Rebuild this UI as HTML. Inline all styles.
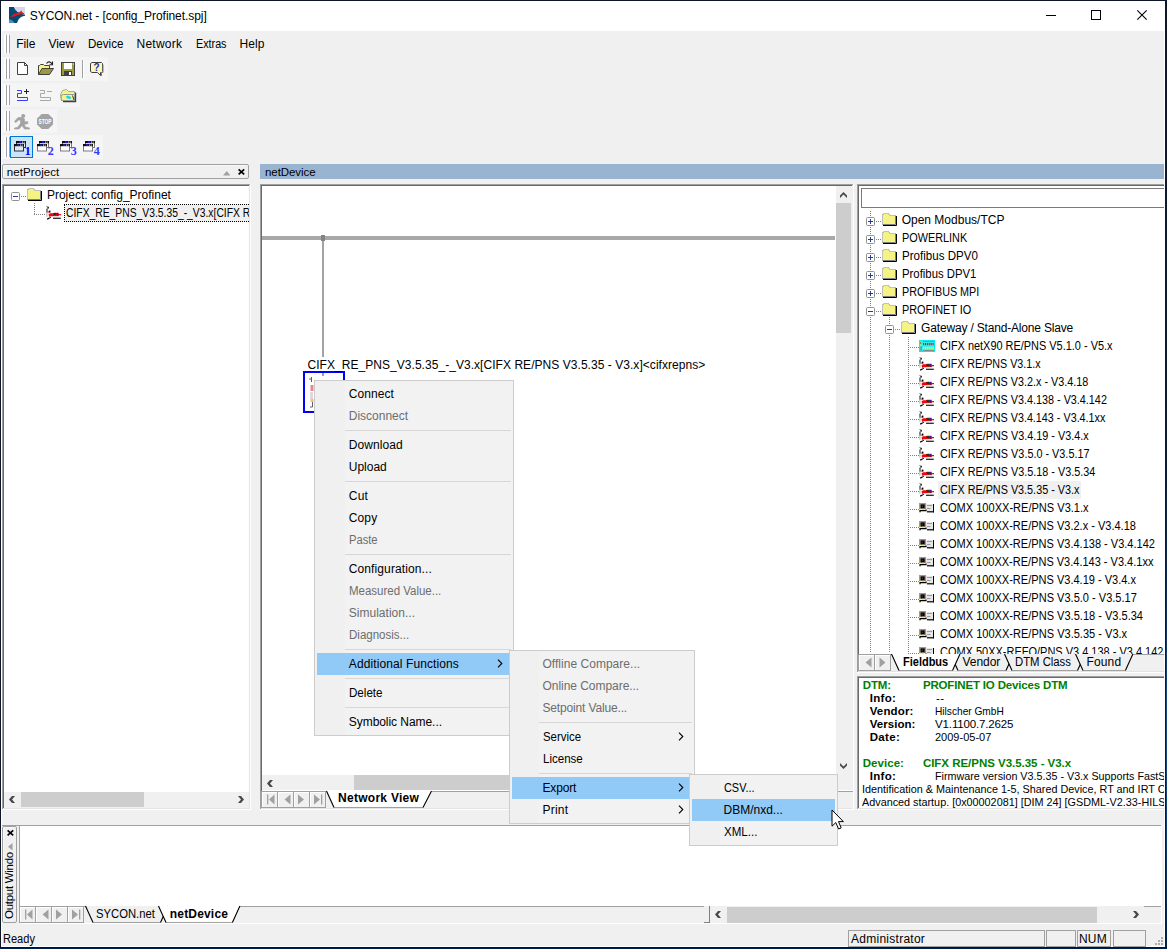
<!DOCTYPE html>
<html lang="en"><head><meta charset="utf-8"><title>SYCON.net - [config_Profinet.spj]</title>
<style>
html,body{margin:0;padding:0;}
body{width:1167px;height:949px;overflow:hidden;position:relative;background:#f0f0f0;font-family:"Liberation Sans",sans-serif;color:#000;}
body>div,body>span,body>svg{position:absolute;}
.t{white-space:pre;line-height:1;display:block;}
.g{color:#6d6d6d;}
svg{overflow:visible;}
</style></head><body>
<div style="left:0px;top:0px;width:1167px;height:949px;background:#f0f0f0;"></div>
<div style="left:1px;top:1px;width:1164px;height:30px;background:#ffffff;"></div>
<div style="left:1px;top:31px;width:1px;height:916px;background:#ffffff;"></div>
<span id="t0" class="t " style="left:29.80px;top:10.20px;font-size:12px;letter-spacing:-0.054px;line-height:12px;">SYCON.net - [config_Profinet.spj]</span>
<svg style="left:1046px;top:10px;" width="11" height="11" viewBox="0 0 11 11"><path d="M0 5.5H10" stroke="#000" stroke-width="1" fill="none"/></svg>
<svg style="left:1091px;top:10px;" width="11" height="11" viewBox="0 0 11 11"><rect x="0.5" y="0.5" width="9" height="9" stroke="#000" stroke-width="1" fill="none"/></svg>
<svg style="left:1137px;top:10px;" width="11" height="11" viewBox="0 0 11 11"><path d="M0.3 0.3L9.7 9.7M9.7 0.3L0.3 9.7" stroke="#000" stroke-width="1.1" fill="none"/></svg>
<svg style="left:9px;top:7px;" width="16" height="16" viewBox="0 0 16 16"><rect width="16" height="16" fill="#004a73"/>
<path d="M4.8 0Q7 6.3 16 7.7V0Z" fill="#d3d9e8"/>
<path d="M16 8.7Q9.6 9.4 8 16H16Z" fill="#ffffff"/>
<path d="M0 12.2Q4 12.6 5.3 16H0Z" fill="#4f8dc3"/>
<path d="M1.1 9.8L4.5 7.2L8 6L10.5 5.2L12.3 3.6L13 5L15.4 6.4L13.5 7.2L11 7.2L10 8.8L9.6 7.7L7 8.6L5 9.8Z" fill="#e8151c"/></svg>
<div style="left:4px;top:35px;width:2px;height:18px;background:#ffffff;"></div>
<div style="left:6px;top:35px;width:1px;height:18px;background:#a0a0a0;"></div>
<div style="left:7px;top:35px;width:2px;height:18px;background:#ffffff;"></div>
<div style="left:9px;top:35px;width:1px;height:18px;background:#a0a0a0;"></div>
<span id="t1" class="t " style="left:16.30px;top:38.20px;font-size:12px;letter-spacing:-0.096px;line-height:12px;">File</span>
<span id="t2" class="t " style="left:48.60px;top:38.20px;font-size:12px;letter-spacing:-0.113px;line-height:12px;">View</span>
<span id="t3" class="t " style="left:87.60px;top:38.20px;font-size:12px;transform:scaleX(0.9650);transform-origin:0 0;line-height:12px;">Device</span>
<span id="t4" class="t " style="left:136.60px;top:38.20px;font-size:12px;letter-spacing:0.212px;line-height:12px;">Network</span>
<span id="t5" class="t " style="left:195.50px;top:38.20px;font-size:12px;transform:scaleX(0.8965);transform-origin:0 0;line-height:12px;">Extras</span>
<span id="t6" class="t " style="left:239.50px;top:38.20px;font-size:12px;letter-spacing:0.088px;line-height:12px;">Help</span>
<div style="left:2px;top:57px;width:106px;height:24px;background:#f5f5f5;"></div>
<div style="left:2px;top:83px;width:78px;height:24px;background:#f5f5f5;"></div>
<div style="left:2px;top:109px;width:55px;height:24px;background:#f5f5f5;"></div>
<div style="left:2px;top:135px;width:101px;height:24px;background:#f5f5f5;"></div>
<div style="left:4px;top:59px;width:2px;height:20px;background:#ffffff;"></div>
<div style="left:6px;top:59px;width:1px;height:20px;background:#a0a0a0;"></div>
<div style="left:7px;top:59px;width:2px;height:20px;background:#ffffff;"></div>
<div style="left:9px;top:59px;width:1px;height:20px;background:#a0a0a0;"></div>
<div style="left:4px;top:85px;width:2px;height:20px;background:#ffffff;"></div>
<div style="left:6px;top:85px;width:1px;height:20px;background:#a0a0a0;"></div>
<div style="left:7px;top:85px;width:2px;height:20px;background:#ffffff;"></div>
<div style="left:9px;top:85px;width:1px;height:20px;background:#a0a0a0;"></div>
<div style="left:4px;top:111px;width:2px;height:20px;background:#ffffff;"></div>
<div style="left:6px;top:111px;width:1px;height:20px;background:#a0a0a0;"></div>
<div style="left:7px;top:111px;width:2px;height:20px;background:#ffffff;"></div>
<div style="left:9px;top:111px;width:1px;height:20px;background:#a0a0a0;"></div>
<div style="left:4px;top:137px;width:2px;height:20px;background:#ffffff;"></div>
<div style="left:6px;top:137px;width:1px;height:20px;background:#a0a0a0;"></div>
<div style="left:7px;top:137px;width:2px;height:20px;background:#ffffff;"></div>
<div style="left:9px;top:137px;width:1px;height:20px;background:#a0a0a0;"></div>
<svg style="left:17px;top:62px;" width="11" height="13" viewBox="0 0 11 13"><path d="M0.5 0.5H7.5L10.5 3.5V12.5H0.5Z" fill="#fff" stroke="#404040"/>
<path d="M7.5 0.5V3.5H10.5" fill="none" stroke="#404040"/></svg>
<svg style="left:38px;top:61px;" width="16" height="14" viewBox="0 0 16 14"><path d="M0.5 13.5V4.5H1.5L2.5 3.5H5.5L6.5 4.5H11.5V7.5" fill="#f5f384" stroke="#404040"/>
<path d="M0.5 13.5L4 7.5H15.5L11.5 13.5Z" fill="#9a9a40" stroke="#404040"/>
<path d="M8.5 2.5C10 0.3 12.5 0.3 14 3" fill="none" stroke="#202020" stroke-width="1.1"/>
<path d="M14.5 0.5V3.8H11.5" fill="none" stroke="#202020" stroke-width="1.1"/></svg>
<svg style="left:61px;top:62px;" width="14" height="14" viewBox="0 0 14 14"><rect x="0.5" y="0.5" width="13" height="13" fill="#9a9a40" stroke="#404040"/>
<rect x="3" y="1" width="8" height="6" fill="#fff"/>
<rect x="3" y="9" width="8" height="4.5" fill="#404040"/>
<rect x="8" y="10" width="2" height="3" fill="#fff"/>
<rect x="12" y="1.5" width="1" height="1" fill="#fff"/></svg>
<div style="left:82px;top:60px;width:1px;height:18px;background:#a0a0a0;"></div>
<div style="left:83px;top:60px;width:1px;height:18px;background:#ffffff;"></div>
<svg style="left:90px;top:62px;" width="14" height="15" viewBox="0 0 14 15"><path d="M2 0.5H11.5L12.5 1.5V9.5L11.5 10.5H10.5V13.5L7.5 10.5H2L0.5 9.5V1.5Z" fill="#fafac0" stroke="#404040"/>
<path d="M13 2.5V10.5H11.5V14" fill="none" stroke="#808080"/>
<text x="6.6" y="9.3" font-family="Liberation Sans" font-weight="bold" font-size="10" text-anchor="middle" fill="#2a2aa8">?</text></svg>
<svg style="left:17px;top:89px;" width="12" height="12" viewBox="0 0 12 12"><path d="M0 1.5H4.5V4.5H0.5V8.5H10.5V11.5H0" fill="none" stroke="#3c3cff" stroke-width="1"/><path d="M7 2.5H12" stroke="#202020" fill="none"/><path d="M9.5 0V5" stroke="#202020" fill="none"/></svg>
<svg style="left:40px;top:89px;" width="12" height="12" viewBox="0 0 12 12"><path d="M0 1.5H4.5V4.5H0.5V8.5H10.5V11.5H0" fill="none" stroke="#a8a8a8" stroke-width="1"/><path d="M7 2.5H12" stroke="#a8a8a8" fill="none"/></svg>
<svg style="left:60px;top:89px;" width="17" height="13" viewBox="0 0 17 13"><path d="M1.5 11.5L0.5 5.5L2.5 1.5L6.5 0.5L8.5 2.5H14.5V4.5" fill="#f5f384" stroke="#a8a8a8"/>
<path d="M15.5 3.5V12.5H3" fill="none" stroke="#404040" stroke-width="1.4"/>
<path d="M1.5 11.5H14.5V5.5H3.5L1 6.5Z" fill="#f5f384" stroke="#989898"/>
<ellipse cx="8.6" cy="8.4" rx="2.6" ry="1.4" fill="#18d8e8" transform="rotate(20 8.6 8.4)"/>
<path d="M12.5 6.5L14 11" stroke="#404040" fill="none"/></svg>
<svg style="left:14px;top:114px;" width="16" height="15" viewBox="0 0 16 15"><circle cx="9.2" cy="2" r="2" fill="#a3a3a3"/>
<path d="M4 3.5H8L10.5 5V8L13.5 7.5L14 9.5L10 10.5L11.5 13L15.5 14V15H10.5L8 11.5L5 15H0.5V14L3.5 13.5L6.5 9.5V6H4.5L2 8.5L0.5 7.5Z" fill="#a3a3a3" stroke="#a3a3a3" stroke-width="0.7"/></svg>
<svg style="left:37px;top:114px;" width="16" height="15" viewBox="0 0 16 15"><path d="M4.7 0H11.3L16 4.4V10.6L11.3 15H4.7L0 10.6V4.4Z" fill="#a3a3a3"/>
<text x="8" y="10" font-family="Liberation Sans" font-weight="bold" font-size="6.4" text-anchor="middle" fill="#fff" textLength="13" lengthAdjust="spacingAndGlyphs">STOP</text></svg>
<div style="left:10px;top:136px;width:23px;height:22px;background:#cce4f7;border:1px solid #0078d7;box-sizing:border-box;"></div>
<svg style="left:14px;top:141px;" width="17" height="15" viewBox="0 0 17 15"><rect x="2.5" y="0.5" width="9" height="6" fill="#dfeaf6" stroke="#303030"/>
<rect x="2" y="0" width="10" height="2.2" fill="#101010"/>
<rect x="5" y="0.4" width="2.4" height="1.5" fill="#2020ff"/>
<rect x="8" y="0.6" width="1" height="1" fill="#fff"/><rect x="9.7" y="0.6" width="1" height="1" fill="#fff"/>
<rect x="0.5" y="3.5" width="9" height="6.5" fill="#dfeaf6" stroke="#303030"/>
<rect x="0" y="3" width="10" height="2.2" fill="#101010"/>
<rect x="3" y="3.4" width="2.4" height="1.5" fill="#2020ff"/>
<rect x="6" y="3.6" width="1" height="1" fill="#fff"/><rect x="7.7" y="3.6" width="1" height="1" fill="#fff"/>
<text x="13.8" y="14" font-family="Liberation Serif" font-weight="bold" font-size="12" text-anchor="middle" fill="#0000ff">1</text></svg>
<svg style="left:37px;top:141px;" width="17" height="15" viewBox="0 0 17 15"><rect x="2.5" y="0.5" width="9" height="6" fill="#ffffff" stroke="#7a7a7a"/>
<rect x="2" y="0" width="10" height="2.2" fill="#101010"/>
<rect x="5" y="0.4" width="2.4" height="1.5" fill="#2020ff"/>
<rect x="8" y="0.6" width="1" height="1" fill="#fff"/><rect x="9.7" y="0.6" width="1" height="1" fill="#fff"/>
<rect x="0.5" y="3.5" width="9" height="6.5" fill="#ffffff" stroke="#7a7a7a"/>
<rect x="0" y="3" width="10" height="2.2" fill="#101010"/>
<rect x="3" y="3.4" width="2.4" height="1.5" fill="#2020ff"/>
<rect x="6" y="3.6" width="1" height="1" fill="#fff"/><rect x="7.7" y="3.6" width="1" height="1" fill="#fff"/>
<text x="13.8" y="14" font-family="Liberation Serif" font-weight="bold" font-size="12" text-anchor="middle" fill="#3838ff">2</text></svg>
<svg style="left:60px;top:141px;" width="17" height="15" viewBox="0 0 17 15"><rect x="2.5" y="0.5" width="9" height="6" fill="#ffffff" stroke="#7a7a7a"/>
<rect x="2" y="0" width="10" height="2.2" fill="#101010"/>
<rect x="5" y="0.4" width="2.4" height="1.5" fill="#2020ff"/>
<rect x="8" y="0.6" width="1" height="1" fill="#fff"/><rect x="9.7" y="0.6" width="1" height="1" fill="#fff"/>
<rect x="0.5" y="3.5" width="9" height="6.5" fill="#ffffff" stroke="#7a7a7a"/>
<rect x="0" y="3" width="10" height="2.2" fill="#101010"/>
<rect x="3" y="3.4" width="2.4" height="1.5" fill="#2020ff"/>
<rect x="6" y="3.6" width="1" height="1" fill="#fff"/><rect x="7.7" y="3.6" width="1" height="1" fill="#fff"/>
<text x="13.8" y="14" font-family="Liberation Serif" font-weight="bold" font-size="12" text-anchor="middle" fill="#3838ff">3</text></svg>
<svg style="left:83px;top:141px;" width="17" height="15" viewBox="0 0 17 15"><rect x="2.5" y="0.5" width="9" height="6" fill="#ffffff" stroke="#7a7a7a"/>
<rect x="2" y="0" width="10" height="2.2" fill="#101010"/>
<rect x="5" y="0.4" width="2.4" height="1.5" fill="#2020ff"/>
<rect x="8" y="0.6" width="1" height="1" fill="#fff"/><rect x="9.7" y="0.6" width="1" height="1" fill="#fff"/>
<rect x="0.5" y="3.5" width="9" height="6.5" fill="#ffffff" stroke="#7a7a7a"/>
<rect x="0" y="3" width="10" height="2.2" fill="#101010"/>
<rect x="3" y="3.4" width="2.4" height="1.5" fill="#2020ff"/>
<rect x="6" y="3.6" width="1" height="1" fill="#fff"/><rect x="7.7" y="3.6" width="1" height="1" fill="#fff"/>
<text x="13.8" y="14" font-family="Liberation Serif" font-weight="bold" font-size="12" text-anchor="middle" fill="#3838ff">4</text></svg>
<div style="left:2px;top:164px;width:247px;height:15px;background:#f0f0f0;border:1px solid #a0a0a0;border-radius:2px;box-sizing:border-box;box-shadow:inset 1px 1px 0 #f8f8f8;"></div>
<span id="t7" class="t " style="left:6.80px;top:166.20px;font-size:11.5px;letter-spacing:0.075px;line-height:12px;">netProject</span>
<svg style="left:223px;top:171px;" width="8" height="5" viewBox="0 0 8 5"><path d="M0 4.5L3.7 0L7.4 4.5Z" fill="#a0a0a0"/></svg>
<svg style="left:238px;top:169px;" width="7" height="6" viewBox="0 0 7 6"><path d="M0.6 0.4L6.2 5.4M6.2 0.4L0.6 5.4" stroke="#000" stroke-width="1.7" fill="none"/></svg>
<div style="left:2px;top:184px;width:249px;height:626px;background:#ffffff;"></div>
<div style="left:2px;top:184px;width:248px;height:625px;background:#a0a0a0;"></div>
<div style="left:3px;top:185px;width:247px;height:624px;background:#e3e3e3;"></div>
<div style="left:3px;top:185px;width:246px;height:623px;background:#696969;"></div>
<div style="left:4px;top:186px;width:245px;height:622px;background:#fff;"></div>
<svg style="left:11px;top:192px;" width="9" height="9" viewBox="0 0 9 9"><rect x="0.5" y="0.5" width="8" height="8" rx="1" fill="#fff" stroke="#919191"/><path d="M2 4.5H7" stroke="#1f3f9f" fill="none"/></svg>
<div style="left:21px;top:196px;width:6px;height:1px;background:repeating-linear-gradient(90deg,#808080 0 1px,transparent 1px 2px);"></div>
<svg style="left:27px;top:187.7px;" width="16" height="14" viewBox="0 0 16 14"><path d="M0.5 11.5V2L2 0.5H6.5L8 2.5H13.5V11.5Z" fill="#f5f384" stroke="#808080"/>
<path d="M0.5 11.5V2L2 0.5H6.5L8 2.5H13.5" fill="none" stroke="#c0c0c0"/>
<path d="M14.5 3V12.5H1" fill="none" stroke="#000"/>
<rect x="1" y="3" width="12" height="8" fill="#f5f384"/><rect x="2" y="1" width="4.5" height="2" fill="#f5f384"/></svg>
<span id="t8" class="t " style="left:46.90px;top:189.20px;font-size:12px;letter-spacing:-0.003px;line-height:12px;">Project: config_Profinet</span>
<div style="left:34px;top:203px;width:1px;height:11px;background:repeating-linear-gradient(180deg,#808080 0 1px,transparent 1px 2px);"></div>
<div style="left:34px;top:214px;width:11px;height:1px;background:repeating-linear-gradient(90deg,#808080 0 1px,transparent 1px 2px);"></div>
<svg style="left:45px;top:206px;" width="16" height="15" viewBox="0 0 16 15"><rect x="1" y="2.6" width="2" height="4.2" fill="#868686"/><rect x="1" y="6.8" width="1.7" height="4" fill="#cfcfcf"/>
<rect x="2.4" y="0.8" width="1.4" height="1.8" fill="#000"/><rect x="1.4" y="0.2" width="1.2" height="0.8" fill="#606060"/>
<rect x="3.8" y="4.6" width="1.6" height="2" fill="#000"/><rect x="3.2" y="5.6" width="1" height="1" fill="#ff0000"/>
<path d="M3.5 8.6L5 7.2H8L9 6.8H13.6V8H16V9.2H13.8V10.2H6L5 10.8H4.2Z" fill="#ff0000"/>
<rect x="8.6" y="7" width="2.6" height="2.3" fill="#101010"/><rect x="9.5" y="7.4" width="1" height="1" fill="#20a0a0"/>
<rect x="12.2" y="7" width="1.1" height="2.6" fill="#1818a0"/><rect x="7.6" y="8" width="0.9" height="1.2" fill="#8020a0"/>
<rect x="9.4" y="9.6" width="1.2" height="0.8" fill="#a0a020"/>
<rect x="8" y="10.6" width="7.8" height="1.1" fill="#fff"/>
<rect x="8" y="11.7" width="7.8" height="1.1" fill="#000"/>
<path d="M2 13.4L3 13.6L6.2 11.6L5.6 10.9L2.2 12.3Z" fill="#000"/></svg>
<div style="left:64px;top:204px;width:185px;height:18px;background:#f0f0f0;"></div>
<div style="left:64px;top:204px;width:186px;height:18px;border:1px dotted #000;border-right:none;box-sizing:border-box;width:185px;"></div>
<div style="left:64px;top:204px;width:185px;height:18px;overflow:hidden;"><span id="t9" class="t " style="left:2.00px;top:3.20px;font-size:12px;transform:scaleX(0.8606);transform-origin:0 0;line-height:12px;position:absolute;">CIFX_RE_PNS_V3.5.35_-_V3.x[CIFX RE/</span></div>
<div style="left:4px;top:792px;width:245px;height:16px;background:#f0f0f0;"></div>
<div style="left:21px;top:792px;width:123px;height:15px;background:#cdcdcd;"></div>
<svg style="left:9px;top:796px;" width="6" height="7" viewBox="0 0 6 7"><path d="M3 0H6L3 3.5L6 7H3L0 3.5Z" fill="#484848"/></svg>
<svg style="left:238px;top:796px;" width="6" height="7" viewBox="0 0 6 7"><path d="M0 0H3L6 3.5L3 7H0L3 3.5Z" fill="#484848"/></svg>
<div style="left:260px;top:164px;width:905px;height:15px;background:#99b4d1;"></div>
<span id="t10" class="t " style="left:265.00px;top:166.20px;font-size:11.5px;letter-spacing:-0.076px;line-height:12px;">netDevice</span>
<div style="left:260px;top:184px;width:594px;height:626px;background:#ffffff;"></div>
<div style="left:260px;top:184px;width:593px;height:625px;background:#a0a0a0;"></div>
<div style="left:261px;top:185px;width:592px;height:624px;background:#e3e3e3;"></div>
<div style="left:261px;top:185px;width:591px;height:623px;background:#696969;"></div>
<div style="left:262px;top:186px;width:590px;height:622px;background:#fff;"></div>
<div style="left:262px;top:236px;width:573px;height:4px;background:#a8a8a8;"></div>
<div style="left:321px;top:235px;width:4px;height:6px;background:#848484;"></div>
<div style="left:322px;top:241px;width:2px;height:116px;background:#a3a3a3;"></div>
<div style="left:303px;top:371px;width:42px;height:42px;background:#ffffff;border:2px solid #0000ff;box-sizing:border-box;"></div>
<div style="left:322px;top:373px;width:2px;height:3px;background:#a0a0a0;"></div>
<svg style="left:308px;top:376px;" width="8" height="32" viewBox="0 0 8 32"><path d="M1 3H3M3.5 1V6" stroke="#606060" fill="none"/>
<rect x="2.5" y="9" width="3" height="6" fill="#e88a8a"/>
<rect x="2" y="16" width="3" height="7" fill="#e4d6e0"/>
<rect x="2.5" y="23" width="3" height="3" fill="#f0c078"/>
<path d="M4.5 26V31H2" stroke="#606060" fill="none"/></svg>
<span id="t11" class="t " style="left:307.50px;top:359.20px;font-size:12px;letter-spacing:0.046px;line-height:12px;">CIFX_RE_PNS_V3.5.35_-_V3.x[CIFX RE/PNS V3.5.35 - V3.x]&lt;cifxrepns&gt;</span>
<div style="left:836px;top:186px;width:17px;height:589px;background:#f0f0f0;"></div>
<div style="left:836px;top:203px;width:15px;height:130px;background:#cdcdcd;"></div>
<svg style="left:840px;top:192px;" width="7" height="6" viewBox="0 0 7 6"><path d="M3.5 0L7 3.5V6L3.5 2.5L0 6V3.5Z" fill="#484848"/></svg>
<svg style="left:840px;top:763px;" width="7" height="6" viewBox="0 0 7 6"><path d="M3.5 6L7 2.5V0L3.5 3.5L0 0V2.5Z" fill="#484848"/></svg>
<div style="left:262px;top:775px;width:591px;height:16px;background:#f0f0f0;"></div>
<div style="left:354px;top:775px;width:482px;height:15px;background:#cdcdcd;"></div>
<svg style="left:267px;top:780px;" width="6" height="7" viewBox="0 0 6 7"><path d="M3 0H6L3 3.5L6 7H3L0 3.5Z" fill="#484848"/></svg>
<div style="left:262px;top:791px;width:591px;height:17px;background:#f0f0f0;"></div>
<div style="left:262px;top:790px;width:591px;height:1px;background:#ffffff;"></div>
<div style="left:262px;top:791px;width:591px;height:1px;background:#a0a0a0;"></div>
<div style="left:261px;top:791px;width:17px;height:17px;background:#f0f0f0;border:1px solid #a0a0a0;box-sizing:border-box;box-shadow:inset 1px 1px 0 #fff;"></div>
<div style="left:277px;top:791px;width:17px;height:17px;background:#f0f0f0;border:1px solid #a0a0a0;box-sizing:border-box;box-shadow:inset 1px 1px 0 #fff;"></div>
<div style="left:293px;top:791px;width:17px;height:17px;background:#f0f0f0;border:1px solid #a0a0a0;box-sizing:border-box;box-shadow:inset 1px 1px 0 #fff;"></div>
<div style="left:309px;top:791px;width:17px;height:17px;background:#f0f0f0;border:1px solid #a0a0a0;box-sizing:border-box;box-shadow:inset 1px 1px 0 #fff;"></div>
<svg style="left:261px;top:791px;" width="65" height="17" viewBox="0 0 65 17"><rect x="6" y="3.5" width="1.3" height="10" fill="#a0a0a0"/><path d="M13.5 3.5L8 8.5L13.5 13.5Z" fill="#a0a0a0"/><path d="M29.5 3.5L23.5 8.5L29.5 13.5Z" fill="#a0a0a0"/><path d="M37 3.5L43 8.5L37 13.5Z" fill="#a0a0a0"/><path d="M53 3.5L59 8.5L53 13.5Z" fill="#a0a0a0"/><rect x="60" y="3.5" width="1.3" height="10" fill="#a0a0a0"/></svg>
<svg style="left:326px;top:791px;" width="106" height="17" viewBox="0 0 106 17"><path d="M0.5 0L8 16.5H97L105.5 0Z" fill="#fff"/>
<path d="M8 16.5H97" fill="none" stroke="#a0a0a0"/><path d="M0.5 0L8 16.5M97 16.5L105.5 0" fill="none" stroke="#000" stroke-width="1.1"/></svg>
<span id="t12" class="t " style="left:338.00px;top:792.20px;font-size:12px;font-weight:bold;letter-spacing:0.277px;line-height:12px;">Network View</span>
<div style="left:857px;top:184px;width:320px;height:489px;background:#ffffff;"></div>
<div style="left:857px;top:184px;width:319px;height:488px;background:#a0a0a0;"></div>
<div style="left:858px;top:185px;width:318px;height:487px;background:#e3e3e3;"></div>
<div style="left:858px;top:185px;width:317px;height:486px;background:#696969;"></div>
<div style="left:859px;top:186px;width:316px;height:485px;background:#fff;"></div>
<div style="left:861px;top:188px;width:310px;height:20px;background:#ffffff;border:1px solid #7a7a7a;box-sizing:border-box;"></div>
<div style="left:870px;top:211px;width:1px;height:442px;background:repeating-linear-gradient(180deg,#808080 0 1px,transparent 1px 2px);"></div>
<div style="left:889px;top:317px;width:1px;height:336px;background:repeating-linear-gradient(180deg,#808080 0 1px,transparent 1px 2px);"></div>
<div style="left:908px;top:337px;width:1px;height:316px;background:repeating-linear-gradient(180deg,#808080 0 1px,transparent 1px 2px);"></div>
<svg style="left:866px;top:217px;" width="9" height="9" viewBox="0 0 9 9"><rect x="0.5" y="0.5" width="8" height="8" rx="1" fill="#fff" stroke="#919191"/><path d="M2 4.5H7" stroke="#1f3f9f" fill="none"/><path d="M4.5 2V7" stroke="#1f3f9f" fill="none"/></svg>
<div style="left:876px;top:221px;width:6px;height:1px;background:repeating-linear-gradient(90deg,#808080 0 1px,transparent 1px 2px);"></div>
<svg style="left:882px;top:213px;" width="16" height="14" viewBox="0 0 16 14"><path d="M0.5 11.5V2L2 0.5H6.5L8 2.5H13.5V11.5Z" fill="#f5f384" stroke="#808080"/>
<path d="M0.5 11.5V2L2 0.5H6.5L8 2.5H13.5" fill="none" stroke="#c0c0c0"/>
<path d="M14.5 3V12.5H1" fill="none" stroke="#000"/>
<rect x="1" y="3" width="12" height="8" fill="#f5f384"/><rect x="2" y="1" width="4.5" height="2" fill="#f5f384"/></svg>
<span id="t13" class="t " style="left:901.70px;top:214.20px;font-size:12px;letter-spacing:-0.001px;line-height:12px;">Open Modbus/TCP</span>
<svg style="left:866px;top:235px;" width="9" height="9" viewBox="0 0 9 9"><rect x="0.5" y="0.5" width="8" height="8" rx="1" fill="#fff" stroke="#919191"/><path d="M2 4.5H7" stroke="#1f3f9f" fill="none"/><path d="M4.5 2V7" stroke="#1f3f9f" fill="none"/></svg>
<div style="left:876px;top:239px;width:6px;height:1px;background:repeating-linear-gradient(90deg,#808080 0 1px,transparent 1px 2px);"></div>
<svg style="left:882px;top:231px;" width="16" height="14" viewBox="0 0 16 14"><path d="M0.5 11.5V2L2 0.5H6.5L8 2.5H13.5V11.5Z" fill="#f5f384" stroke="#808080"/>
<path d="M0.5 11.5V2L2 0.5H6.5L8 2.5H13.5" fill="none" stroke="#c0c0c0"/>
<path d="M14.5 3V12.5H1" fill="none" stroke="#000"/>
<rect x="1" y="3" width="12" height="8" fill="#f5f384"/><rect x="2" y="1" width="4.5" height="2" fill="#f5f384"/></svg>
<span id="t14" class="t " style="left:901.70px;top:232.20px;font-size:12px;transform:scaleX(0.9054);transform-origin:0 0;line-height:12px;">POWERLINK</span>
<svg style="left:866px;top:253px;" width="9" height="9" viewBox="0 0 9 9"><rect x="0.5" y="0.5" width="8" height="8" rx="1" fill="#fff" stroke="#919191"/><path d="M2 4.5H7" stroke="#1f3f9f" fill="none"/><path d="M4.5 2V7" stroke="#1f3f9f" fill="none"/></svg>
<div style="left:876px;top:257px;width:6px;height:1px;background:repeating-linear-gradient(90deg,#808080 0 1px,transparent 1px 2px);"></div>
<svg style="left:882px;top:249px;" width="16" height="14" viewBox="0 0 16 14"><path d="M0.5 11.5V2L2 0.5H6.5L8 2.5H13.5V11.5Z" fill="#f5f384" stroke="#808080"/>
<path d="M0.5 11.5V2L2 0.5H6.5L8 2.5H13.5" fill="none" stroke="#c0c0c0"/>
<path d="M14.5 3V12.5H1" fill="none" stroke="#000"/>
<rect x="1" y="3" width="12" height="8" fill="#f5f384"/><rect x="2" y="1" width="4.5" height="2" fill="#f5f384"/></svg>
<span id="t15" class="t " style="left:901.70px;top:250.20px;font-size:12px;transform:scaleX(0.9643);transform-origin:0 0;line-height:12px;">Profibus DPV0</span>
<svg style="left:866px;top:271px;" width="9" height="9" viewBox="0 0 9 9"><rect x="0.5" y="0.5" width="8" height="8" rx="1" fill="#fff" stroke="#919191"/><path d="M2 4.5H7" stroke="#1f3f9f" fill="none"/><path d="M4.5 2V7" stroke="#1f3f9f" fill="none"/></svg>
<div style="left:876px;top:275px;width:6px;height:1px;background:repeating-linear-gradient(90deg,#808080 0 1px,transparent 1px 2px);"></div>
<svg style="left:882px;top:267px;" width="16" height="14" viewBox="0 0 16 14"><path d="M0.5 11.5V2L2 0.5H6.5L8 2.5H13.5V11.5Z" fill="#f5f384" stroke="#808080"/>
<path d="M0.5 11.5V2L2 0.5H6.5L8 2.5H13.5" fill="none" stroke="#c0c0c0"/>
<path d="M14.5 3V12.5H1" fill="none" stroke="#000"/>
<rect x="1" y="3" width="12" height="8" fill="#f5f384"/><rect x="2" y="1" width="4.5" height="2" fill="#f5f384"/></svg>
<span id="t16" class="t " style="left:901.70px;top:268.20px;font-size:12px;transform:scaleX(0.9453);transform-origin:0 0;line-height:12px;">Profibus DPV1</span>
<svg style="left:866px;top:289px;" width="9" height="9" viewBox="0 0 9 9"><rect x="0.5" y="0.5" width="8" height="8" rx="1" fill="#fff" stroke="#919191"/><path d="M2 4.5H7" stroke="#1f3f9f" fill="none"/><path d="M4.5 2V7" stroke="#1f3f9f" fill="none"/></svg>
<div style="left:876px;top:293px;width:6px;height:1px;background:repeating-linear-gradient(90deg,#808080 0 1px,transparent 1px 2px);"></div>
<svg style="left:882px;top:285px;" width="16" height="14" viewBox="0 0 16 14"><path d="M0.5 11.5V2L2 0.5H6.5L8 2.5H13.5V11.5Z" fill="#f5f384" stroke="#808080"/>
<path d="M0.5 11.5V2L2 0.5H6.5L8 2.5H13.5" fill="none" stroke="#c0c0c0"/>
<path d="M14.5 3V12.5H1" fill="none" stroke="#000"/>
<rect x="1" y="3" width="12" height="8" fill="#f5f384"/><rect x="2" y="1" width="4.5" height="2" fill="#f5f384"/></svg>
<span id="t17" class="t " style="left:901.70px;top:286.20px;font-size:12px;transform:scaleX(0.8987);transform-origin:0 0;line-height:12px;">PROFIBUS MPI</span>
<svg style="left:866px;top:307px;" width="9" height="9" viewBox="0 0 9 9"><rect x="0.5" y="0.5" width="8" height="8" rx="1" fill="#fff" stroke="#919191"/><path d="M2 4.5H7" stroke="#1f3f9f" fill="none"/></svg>
<div style="left:876px;top:311px;width:6px;height:1px;background:repeating-linear-gradient(90deg,#808080 0 1px,transparent 1px 2px);"></div>
<svg style="left:882px;top:303px;" width="16" height="14" viewBox="0 0 16 14"><path d="M0.5 11.5V2L2 0.5H6.5L8 2.5H13.5V11.5Z" fill="#f5f384" stroke="#808080"/>
<path d="M0.5 11.5V2L2 0.5H6.5L8 2.5H13.5" fill="none" stroke="#c0c0c0"/>
<path d="M14.5 3V12.5H1" fill="none" stroke="#000"/>
<rect x="1" y="3" width="12" height="8" fill="#f5f384"/><rect x="2" y="1" width="4.5" height="2" fill="#f5f384"/></svg>
<span id="t18" class="t " style="left:901.70px;top:304.20px;font-size:12px;transform:scaleX(0.9050);transform-origin:0 0;line-height:12px;">PROFINET IO</span>
<svg style="left:885px;top:325px;" width="9" height="9" viewBox="0 0 9 9"><rect x="0.5" y="0.5" width="8" height="8" rx="1" fill="#fff" stroke="#919191"/><path d="M2 4.5H7" stroke="#1f3f9f" fill="none"/></svg>
<div style="left:895px;top:329px;width:6px;height:1px;background:repeating-linear-gradient(90deg,#808080 0 1px,transparent 1px 2px);"></div>
<svg style="left:901px;top:321px;" width="16" height="14" viewBox="0 0 16 14"><path d="M0.5 11.5V2L2 0.5H6.5L8 2.5H13.5V11.5Z" fill="#f5f384" stroke="#808080"/>
<path d="M0.5 11.5V2L2 0.5H6.5L8 2.5H13.5" fill="none" stroke="#c0c0c0"/>
<path d="M14.5 3V12.5H1" fill="none" stroke="#000"/>
<rect x="1" y="3" width="12" height="8" fill="#f5f384"/><rect x="2" y="1" width="4.5" height="2" fill="#f5f384"/></svg>
<span id="t19" class="t " style="left:921.10px;top:322.20px;font-size:12px;letter-spacing:-0.176px;line-height:12px;">Gateway / Stand-Alone Slave</span>
<div style="left:908px;top:347px;width:11px;height:1px;background:repeating-linear-gradient(90deg,#808080 0 1px,transparent 1px 2px);"></div>
<svg style="left:919px;top:340px;" width="16" height="12" viewBox="0 0 16 12"><rect x="0" y="0" width="16" height="12" fill="#00f0f0"/><rect x="1" y="1" width="14" height="10" fill="#30f4f4"/><rect x="4" y="1.2" width="11" height="0.9" fill="#808080"/><rect x="4" y="10" width="11" height="0.9" fill="#808080"/><rect x="4.0" y="3" width="1.1" height="2.2" fill="#ff0000"/><rect x="4.0" y="7" width="1.1" height="2.2" fill="#ffff00"/><rect x="5.9" y="3" width="1.1" height="2.2" fill="#ff0000"/><rect x="5.9" y="7" width="1.1" height="2.2" fill="#ffff00"/><rect x="7.8" y="3" width="1.1" height="2.2" fill="#ff0000"/><rect x="7.8" y="7" width="1.1" height="2.2" fill="#ffff00"/><rect x="9.7" y="3" width="1.1" height="2.2" fill="#ff0000"/><rect x="9.7" y="7" width="1.1" height="2.2" fill="#ffff00"/><rect x="11.6" y="3" width="1.1" height="2.2" fill="#ff0000"/><rect x="11.6" y="7" width="1.1" height="2.2" fill="#ffff00"/><rect x="13.5" y="3" width="1.1" height="2.2" fill="#ff0000"/><rect x="13.5" y="7" width="1.1" height="2.2" fill="#ffff00"/><rect x="1.2" y="2.4" width="1" height="1" fill="#ff0000"/><rect x="1.2" y="3.4" width="1" height="1" fill="#00c000"/><rect x="1.2" y="4.4" width="1" height="1" fill="#ffff00"/><rect x="1.4" y="6.3" width="1.4" height="4.4" fill="#808080"/></svg>
<span id="t20" class="t " style="left:939.90px;top:340.20px;font-size:12px;transform:scaleX(0.9107);transform-origin:0 0;line-height:12px;">CIFX netX90 RE/PNS V5.1.0 - V5.x</span>
<div style="left:908px;top:365px;width:11px;height:1px;background:repeating-linear-gradient(90deg,#808080 0 1px,transparent 1px 2px);"></div>
<svg style="left:918px;top:357px;" width="16" height="15" viewBox="0 0 16 15"><rect x="1" y="2.6" width="2" height="4.2" fill="#868686"/><rect x="1" y="6.8" width="1.7" height="4" fill="#cfcfcf"/>
<rect x="2.4" y="0.8" width="1.4" height="1.8" fill="#000"/><rect x="1.4" y="0.2" width="1.2" height="0.8" fill="#606060"/>
<rect x="3.8" y="4.6" width="1.6" height="2" fill="#000"/><rect x="3.2" y="5.6" width="1" height="1" fill="#ff0000"/>
<path d="M3.5 8.6L5 7.2H8L9 6.8H13.6V8H16V9.2H13.8V10.2H6L5 10.8H4.2Z" fill="#ff0000"/>
<rect x="8.6" y="7" width="2.6" height="2.3" fill="#101010"/><rect x="9.5" y="7.4" width="1" height="1" fill="#20a0a0"/>
<rect x="12.2" y="7" width="1.1" height="2.6" fill="#1818a0"/><rect x="7.6" y="8" width="0.9" height="1.2" fill="#8020a0"/>
<rect x="9.4" y="9.6" width="1.2" height="0.8" fill="#a0a020"/>
<rect x="8" y="10.6" width="7.8" height="1.1" fill="#fff"/>
<rect x="8" y="11.7" width="7.8" height="1.1" fill="#000"/>
<path d="M2 13.4L3 13.6L6.2 11.6L5.6 10.9L2.2 12.3Z" fill="#000"/></svg>
<span id="t21" class="t " style="left:939.90px;top:358.20px;font-size:12px;transform:scaleX(0.8926);transform-origin:0 0;line-height:12px;">CIFX RE/PNS V3.1.x</span>
<div style="left:908px;top:383px;width:11px;height:1px;background:repeating-linear-gradient(90deg,#808080 0 1px,transparent 1px 2px);"></div>
<svg style="left:918px;top:375px;" width="16" height="15" viewBox="0 0 16 15"><rect x="1" y="2.6" width="2" height="4.2" fill="#868686"/><rect x="1" y="6.8" width="1.7" height="4" fill="#cfcfcf"/>
<rect x="2.4" y="0.8" width="1.4" height="1.8" fill="#000"/><rect x="1.4" y="0.2" width="1.2" height="0.8" fill="#606060"/>
<rect x="3.8" y="4.6" width="1.6" height="2" fill="#000"/><rect x="3.2" y="5.6" width="1" height="1" fill="#ff0000"/>
<path d="M3.5 8.6L5 7.2H8L9 6.8H13.6V8H16V9.2H13.8V10.2H6L5 10.8H4.2Z" fill="#ff0000"/>
<rect x="8.6" y="7" width="2.6" height="2.3" fill="#101010"/><rect x="9.5" y="7.4" width="1" height="1" fill="#20a0a0"/>
<rect x="12.2" y="7" width="1.1" height="2.6" fill="#1818a0"/><rect x="7.6" y="8" width="0.9" height="1.2" fill="#8020a0"/>
<rect x="9.4" y="9.6" width="1.2" height="0.8" fill="#a0a020"/>
<rect x="8" y="10.6" width="7.8" height="1.1" fill="#fff"/>
<rect x="8" y="11.7" width="7.8" height="1.1" fill="#000"/>
<path d="M2 13.4L3 13.6L6.2 11.6L5.6 10.9L2.2 12.3Z" fill="#000"/></svg>
<span id="t22" class="t " style="left:939.90px;top:376.20px;font-size:12px;transform:scaleX(0.9002);transform-origin:0 0;line-height:12px;">CIFX RE/PNS V3.2.x - V3.4.18</span>
<div style="left:908px;top:401px;width:11px;height:1px;background:repeating-linear-gradient(90deg,#808080 0 1px,transparent 1px 2px);"></div>
<svg style="left:918px;top:393px;" width="16" height="15" viewBox="0 0 16 15"><rect x="1" y="2.6" width="2" height="4.2" fill="#868686"/><rect x="1" y="6.8" width="1.7" height="4" fill="#cfcfcf"/>
<rect x="2.4" y="0.8" width="1.4" height="1.8" fill="#000"/><rect x="1.4" y="0.2" width="1.2" height="0.8" fill="#606060"/>
<rect x="3.8" y="4.6" width="1.6" height="2" fill="#000"/><rect x="3.2" y="5.6" width="1" height="1" fill="#ff0000"/>
<path d="M3.5 8.6L5 7.2H8L9 6.8H13.6V8H16V9.2H13.8V10.2H6L5 10.8H4.2Z" fill="#ff0000"/>
<rect x="8.6" y="7" width="2.6" height="2.3" fill="#101010"/><rect x="9.5" y="7.4" width="1" height="1" fill="#20a0a0"/>
<rect x="12.2" y="7" width="1.1" height="2.6" fill="#1818a0"/><rect x="7.6" y="8" width="0.9" height="1.2" fill="#8020a0"/>
<rect x="9.4" y="9.6" width="1.2" height="0.8" fill="#a0a020"/>
<rect x="8" y="10.6" width="7.8" height="1.1" fill="#fff"/>
<rect x="8" y="11.7" width="7.8" height="1.1" fill="#000"/>
<path d="M2 13.4L3 13.6L6.2 11.6L5.6 10.9L2.2 12.3Z" fill="#000"/></svg>
<span id="t23" class="t " style="left:939.90px;top:394.20px;font-size:12px;transform:scaleX(0.9000);transform-origin:0 0;line-height:12px;">CIFX RE/PNS V3.4.138 - V3.4.142</span>
<div style="left:908px;top:419px;width:11px;height:1px;background:repeating-linear-gradient(90deg,#808080 0 1px,transparent 1px 2px);"></div>
<svg style="left:918px;top:411px;" width="16" height="15" viewBox="0 0 16 15"><rect x="1" y="2.6" width="2" height="4.2" fill="#868686"/><rect x="1" y="6.8" width="1.7" height="4" fill="#cfcfcf"/>
<rect x="2.4" y="0.8" width="1.4" height="1.8" fill="#000"/><rect x="1.4" y="0.2" width="1.2" height="0.8" fill="#606060"/>
<rect x="3.8" y="4.6" width="1.6" height="2" fill="#000"/><rect x="3.2" y="5.6" width="1" height="1" fill="#ff0000"/>
<path d="M3.5 8.6L5 7.2H8L9 6.8H13.6V8H16V9.2H13.8V10.2H6L5 10.8H4.2Z" fill="#ff0000"/>
<rect x="8.6" y="7" width="2.6" height="2.3" fill="#101010"/><rect x="9.5" y="7.4" width="1" height="1" fill="#20a0a0"/>
<rect x="12.2" y="7" width="1.1" height="2.6" fill="#1818a0"/><rect x="7.6" y="8" width="0.9" height="1.2" fill="#8020a0"/>
<rect x="9.4" y="9.6" width="1.2" height="0.8" fill="#a0a020"/>
<rect x="8" y="10.6" width="7.8" height="1.1" fill="#fff"/>
<rect x="8" y="11.7" width="7.8" height="1.1" fill="#000"/>
<path d="M2 13.4L3 13.6L6.2 11.6L5.6 10.9L2.2 12.3Z" fill="#000"/></svg>
<span id="t24" class="t " style="left:939.90px;top:412.20px;font-size:12px;transform:scaleX(0.8985);transform-origin:0 0;line-height:12px;">CIFX RE/PNS V3.4.143 - V3.4.1xx</span>
<div style="left:908px;top:437px;width:11px;height:1px;background:repeating-linear-gradient(90deg,#808080 0 1px,transparent 1px 2px);"></div>
<svg style="left:918px;top:429px;" width="16" height="15" viewBox="0 0 16 15"><rect x="1" y="2.6" width="2" height="4.2" fill="#868686"/><rect x="1" y="6.8" width="1.7" height="4" fill="#cfcfcf"/>
<rect x="2.4" y="0.8" width="1.4" height="1.8" fill="#000"/><rect x="1.4" y="0.2" width="1.2" height="0.8" fill="#606060"/>
<rect x="3.8" y="4.6" width="1.6" height="2" fill="#000"/><rect x="3.2" y="5.6" width="1" height="1" fill="#ff0000"/>
<path d="M3.5 8.6L5 7.2H8L9 6.8H13.6V8H16V9.2H13.8V10.2H6L5 10.8H4.2Z" fill="#ff0000"/>
<rect x="8.6" y="7" width="2.6" height="2.3" fill="#101010"/><rect x="9.5" y="7.4" width="1" height="1" fill="#20a0a0"/>
<rect x="12.2" y="7" width="1.1" height="2.6" fill="#1818a0"/><rect x="7.6" y="8" width="0.9" height="1.2" fill="#8020a0"/>
<rect x="9.4" y="9.6" width="1.2" height="0.8" fill="#a0a020"/>
<rect x="8" y="10.6" width="7.8" height="1.1" fill="#fff"/>
<rect x="8" y="11.7" width="7.8" height="1.1" fill="#000"/>
<path d="M2 13.4L3 13.6L6.2 11.6L5.6 10.9L2.2 12.3Z" fill="#000"/></svg>
<span id="t25" class="t " style="left:939.90px;top:430.20px;font-size:12px;transform:scaleX(0.9021);transform-origin:0 0;line-height:12px;">CIFX RE/PNS V3.4.19 - V3.4.x</span>
<div style="left:908px;top:455px;width:11px;height:1px;background:repeating-linear-gradient(90deg,#808080 0 1px,transparent 1px 2px);"></div>
<svg style="left:918px;top:447px;" width="16" height="15" viewBox="0 0 16 15"><rect x="1" y="2.6" width="2" height="4.2" fill="#868686"/><rect x="1" y="6.8" width="1.7" height="4" fill="#cfcfcf"/>
<rect x="2.4" y="0.8" width="1.4" height="1.8" fill="#000"/><rect x="1.4" y="0.2" width="1.2" height="0.8" fill="#606060"/>
<rect x="3.8" y="4.6" width="1.6" height="2" fill="#000"/><rect x="3.2" y="5.6" width="1" height="1" fill="#ff0000"/>
<path d="M3.5 8.6L5 7.2H8L9 6.8H13.6V8H16V9.2H13.8V10.2H6L5 10.8H4.2Z" fill="#ff0000"/>
<rect x="8.6" y="7" width="2.6" height="2.3" fill="#101010"/><rect x="9.5" y="7.4" width="1" height="1" fill="#20a0a0"/>
<rect x="12.2" y="7" width="1.1" height="2.6" fill="#1818a0"/><rect x="7.6" y="8" width="0.9" height="1.2" fill="#8020a0"/>
<rect x="9.4" y="9.6" width="1.2" height="0.8" fill="#a0a020"/>
<rect x="8" y="10.6" width="7.8" height="1.1" fill="#fff"/>
<rect x="8" y="11.7" width="7.8" height="1.1" fill="#000"/>
<path d="M2 13.4L3 13.6L6.2 11.6L5.6 10.9L2.2 12.3Z" fill="#000"/></svg>
<span id="t26" class="t " style="left:939.90px;top:448.20px;font-size:12px;transform:scaleX(0.9038);transform-origin:0 0;line-height:12px;">CIFX RE/PNS V3.5.0 - V3.5.17</span>
<div style="left:908px;top:473px;width:11px;height:1px;background:repeating-linear-gradient(90deg,#808080 0 1px,transparent 1px 2px);"></div>
<svg style="left:918px;top:465px;" width="16" height="15" viewBox="0 0 16 15"><rect x="1" y="2.6" width="2" height="4.2" fill="#868686"/><rect x="1" y="6.8" width="1.7" height="4" fill="#cfcfcf"/>
<rect x="2.4" y="0.8" width="1.4" height="1.8" fill="#000"/><rect x="1.4" y="0.2" width="1.2" height="0.8" fill="#606060"/>
<rect x="3.8" y="4.6" width="1.6" height="2" fill="#000"/><rect x="3.2" y="5.6" width="1" height="1" fill="#ff0000"/>
<path d="M3.5 8.6L5 7.2H8L9 6.8H13.6V8H16V9.2H13.8V10.2H6L5 10.8H4.2Z" fill="#ff0000"/>
<rect x="8.6" y="7" width="2.6" height="2.3" fill="#101010"/><rect x="9.5" y="7.4" width="1" height="1" fill="#20a0a0"/>
<rect x="12.2" y="7" width="1.1" height="2.6" fill="#1818a0"/><rect x="7.6" y="8" width="0.9" height="1.2" fill="#8020a0"/>
<rect x="9.4" y="9.6" width="1.2" height="0.8" fill="#a0a020"/>
<rect x="8" y="10.6" width="7.8" height="1.1" fill="#fff"/>
<rect x="8" y="11.7" width="7.8" height="1.1" fill="#000"/>
<path d="M2 13.4L3 13.6L6.2 11.6L5.6 10.9L2.2 12.3Z" fill="#000"/></svg>
<span id="t27" class="t " style="left:939.90px;top:466.20px;font-size:12px;transform:scaleX(0.9025);transform-origin:0 0;line-height:12px;">CIFX RE/PNS V3.5.18 - V3.5.34</span>
<div style="left:908px;top:491px;width:11px;height:1px;background:repeating-linear-gradient(90deg,#808080 0 1px,transparent 1px 2px);"></div>
<div style="left:938px;top:481px;width:143px;height:18px;background:#f0f0f0;"></div>
<svg style="left:918px;top:483px;" width="16" height="15" viewBox="0 0 16 15"><rect x="1" y="2.6" width="2" height="4.2" fill="#868686"/><rect x="1" y="6.8" width="1.7" height="4" fill="#cfcfcf"/>
<rect x="2.4" y="0.8" width="1.4" height="1.8" fill="#000"/><rect x="1.4" y="0.2" width="1.2" height="0.8" fill="#606060"/>
<rect x="3.8" y="4.6" width="1.6" height="2" fill="#000"/><rect x="3.2" y="5.6" width="1" height="1" fill="#ff0000"/>
<path d="M3.5 8.6L5 7.2H8L9 6.8H13.6V8H16V9.2H13.8V10.2H6L5 10.8H4.2Z" fill="#ff0000"/>
<rect x="8.6" y="7" width="2.6" height="2.3" fill="#101010"/><rect x="9.5" y="7.4" width="1" height="1" fill="#20a0a0"/>
<rect x="12.2" y="7" width="1.1" height="2.6" fill="#1818a0"/><rect x="7.6" y="8" width="0.9" height="1.2" fill="#8020a0"/>
<rect x="9.4" y="9.6" width="1.2" height="0.8" fill="#a0a020"/>
<rect x="8" y="10.6" width="7.8" height="1.1" fill="#fff"/>
<rect x="8" y="11.7" width="7.8" height="1.1" fill="#000"/>
<path d="M2 13.4L3 13.6L6.2 11.6L5.6 10.9L2.2 12.3Z" fill="#000"/></svg>
<span id="t28" class="t " style="left:939.90px;top:484.20px;font-size:12px;transform:scaleX(0.9009);transform-origin:0 0;line-height:12px;">CIFX RE/PNS V3.5.35 - V3.x</span>
<div style="left:908px;top:509px;width:11px;height:1px;background:repeating-linear-gradient(90deg,#808080 0 1px,transparent 1px 2px);"></div>
<svg style="left:919px;top:503px;" width="16" height="10" viewBox="0 0 16 10"><rect x="0" y="0" width="7" height="6.2" fill="#9a9a9a"/>
<rect x="1.6" y="1.4" width="4.2" height="4" fill="#000"/>
<rect x="2.6" y="2.6" width="1.2" height="1" fill="#e02020"/><rect x="2.6" y="3.6" width="1.2" height="1" fill="#1818c0"/>
<rect x="5.8" y="2" width="1" height="3" fill="#a0a020"/><rect x="0.6" y="4.8" width="1.2" height="1" fill="#a0a020"/><rect x="3" y="5.4" width="2" height="0.8" fill="#a0a020"/>
<rect x="7" y="1" width="7" height="7.4" fill="#e6e6e6"/>
<path d="M8 2.5H13M8 5.5H11.5" stroke="#9a9a9a" fill="none"/>
<rect x="14" y="1" width="1" height="8.4" fill="#000"/>
<rect x="8" y="8.2" width="7" height="1.2" fill="#000"/>
<path d="M1 9.2V7.6H7V6.6" fill="none" stroke="#000" stroke-width="1.2"/></svg>
<span id="t29" class="t " style="left:939.90px;top:502.20px;font-size:12px;transform:scaleX(0.9207);transform-origin:0 0;line-height:12px;">COMX 100XX-RE/PNS V3.1.x</span>
<div style="left:908px;top:527px;width:11px;height:1px;background:repeating-linear-gradient(90deg,#808080 0 1px,transparent 1px 2px);"></div>
<svg style="left:919px;top:521px;" width="16" height="10" viewBox="0 0 16 10"><rect x="0" y="0" width="7" height="6.2" fill="#9a9a9a"/>
<rect x="1.6" y="1.4" width="4.2" height="4" fill="#000"/>
<rect x="2.6" y="2.6" width="1.2" height="1" fill="#e02020"/><rect x="2.6" y="3.6" width="1.2" height="1" fill="#1818c0"/>
<rect x="5.8" y="2" width="1" height="3" fill="#a0a020"/><rect x="0.6" y="4.8" width="1.2" height="1" fill="#a0a020"/><rect x="3" y="5.4" width="2" height="0.8" fill="#a0a020"/>
<rect x="7" y="1" width="7" height="7.4" fill="#e6e6e6"/>
<path d="M8 2.5H13M8 5.5H11.5" stroke="#9a9a9a" fill="none"/>
<rect x="14" y="1" width="1" height="8.4" fill="#000"/>
<rect x="8" y="8.2" width="7" height="1.2" fill="#000"/>
<path d="M1 9.2V7.6H7V6.6" fill="none" stroke="#000" stroke-width="1.2"/></svg>
<span id="t30" class="t " style="left:939.90px;top:520.20px;font-size:12px;transform:scaleX(0.9179);transform-origin:0 0;line-height:12px;">COMX 100XX-RE/PNS V3.2.x - V3.4.18</span>
<div style="left:908px;top:545px;width:11px;height:1px;background:repeating-linear-gradient(90deg,#808080 0 1px,transparent 1px 2px);"></div>
<svg style="left:919px;top:539px;" width="16" height="10" viewBox="0 0 16 10"><rect x="0" y="0" width="7" height="6.2" fill="#9a9a9a"/>
<rect x="1.6" y="1.4" width="4.2" height="4" fill="#000"/>
<rect x="2.6" y="2.6" width="1.2" height="1" fill="#e02020"/><rect x="2.6" y="3.6" width="1.2" height="1" fill="#1818c0"/>
<rect x="5.8" y="2" width="1" height="3" fill="#a0a020"/><rect x="0.6" y="4.8" width="1.2" height="1" fill="#a0a020"/><rect x="3" y="5.4" width="2" height="0.8" fill="#a0a020"/>
<rect x="7" y="1" width="7" height="7.4" fill="#e6e6e6"/>
<path d="M8 2.5H13M8 5.5H11.5" stroke="#9a9a9a" fill="none"/>
<rect x="14" y="1" width="1" height="8.4" fill="#000"/>
<rect x="8" y="8.2" width="7" height="1.2" fill="#000"/>
<path d="M1 9.2V7.6H7V6.6" fill="none" stroke="#000" stroke-width="1.2"/></svg>
<span id="t31" class="t " style="left:939.90px;top:538.20px;font-size:12px;transform:scaleX(0.9179);transform-origin:0 0;line-height:12px;">COMX 100XX-RE/PNS V3.4.138 - V3.4.142</span>
<div style="left:908px;top:563px;width:11px;height:1px;background:repeating-linear-gradient(90deg,#808080 0 1px,transparent 1px 2px);"></div>
<svg style="left:919px;top:557px;" width="16" height="10" viewBox="0 0 16 10"><rect x="0" y="0" width="7" height="6.2" fill="#9a9a9a"/>
<rect x="1.6" y="1.4" width="4.2" height="4" fill="#000"/>
<rect x="2.6" y="2.6" width="1.2" height="1" fill="#e02020"/><rect x="2.6" y="3.6" width="1.2" height="1" fill="#1818c0"/>
<rect x="5.8" y="2" width="1" height="3" fill="#a0a020"/><rect x="0.6" y="4.8" width="1.2" height="1" fill="#a0a020"/><rect x="3" y="5.4" width="2" height="0.8" fill="#a0a020"/>
<rect x="7" y="1" width="7" height="7.4" fill="#e6e6e6"/>
<path d="M8 2.5H13M8 5.5H11.5" stroke="#9a9a9a" fill="none"/>
<rect x="14" y="1" width="1" height="8.4" fill="#000"/>
<rect x="8" y="8.2" width="7" height="1.2" fill="#000"/>
<path d="M1 9.2V7.6H7V6.6" fill="none" stroke="#000" stroke-width="1.2"/></svg>
<span id="t32" class="t " style="left:939.90px;top:556.20px;font-size:12px;transform:scaleX(0.9168);transform-origin:0 0;line-height:12px;">COMX 100XX-RE/PNS V3.4.143 - V3.4.1xx</span>
<div style="left:908px;top:581px;width:11px;height:1px;background:repeating-linear-gradient(90deg,#808080 0 1px,transparent 1px 2px);"></div>
<svg style="left:919px;top:575px;" width="16" height="10" viewBox="0 0 16 10"><rect x="0" y="0" width="7" height="6.2" fill="#9a9a9a"/>
<rect x="1.6" y="1.4" width="4.2" height="4" fill="#000"/>
<rect x="2.6" y="2.6" width="1.2" height="1" fill="#e02020"/><rect x="2.6" y="3.6" width="1.2" height="1" fill="#1818c0"/>
<rect x="5.8" y="2" width="1" height="3" fill="#a0a020"/><rect x="0.6" y="4.8" width="1.2" height="1" fill="#a0a020"/><rect x="3" y="5.4" width="2" height="0.8" fill="#a0a020"/>
<rect x="7" y="1" width="7" height="7.4" fill="#e6e6e6"/>
<path d="M8 2.5H13M8 5.5H11.5" stroke="#9a9a9a" fill="none"/>
<rect x="14" y="1" width="1" height="8.4" fill="#000"/>
<rect x="8" y="8.2" width="7" height="1.2" fill="#000"/>
<path d="M1 9.2V7.6H7V6.6" fill="none" stroke="#000" stroke-width="1.2"/></svg>
<span id="t33" class="t " style="left:939.90px;top:574.20px;font-size:12px;transform:scaleX(0.9179);transform-origin:0 0;line-height:12px;">COMX 100XX-RE/PNS V3.4.19 - V3.4.x</span>
<div style="left:908px;top:599px;width:11px;height:1px;background:repeating-linear-gradient(90deg,#808080 0 1px,transparent 1px 2px);"></div>
<svg style="left:919px;top:593px;" width="16" height="10" viewBox="0 0 16 10"><rect x="0" y="0" width="7" height="6.2" fill="#9a9a9a"/>
<rect x="1.6" y="1.4" width="4.2" height="4" fill="#000"/>
<rect x="2.6" y="2.6" width="1.2" height="1" fill="#e02020"/><rect x="2.6" y="3.6" width="1.2" height="1" fill="#1818c0"/>
<rect x="5.8" y="2" width="1" height="3" fill="#a0a020"/><rect x="0.6" y="4.8" width="1.2" height="1" fill="#a0a020"/><rect x="3" y="5.4" width="2" height="0.8" fill="#a0a020"/>
<rect x="7" y="1" width="7" height="7.4" fill="#e6e6e6"/>
<path d="M8 2.5H13M8 5.5H11.5" stroke="#9a9a9a" fill="none"/>
<rect x="14" y="1" width="1" height="8.4" fill="#000"/>
<rect x="8" y="8.2" width="7" height="1.2" fill="#000"/>
<path d="M1 9.2V7.6H7V6.6" fill="none" stroke="#000" stroke-width="1.2"/></svg>
<span id="t34" class="t " style="left:939.90px;top:592.20px;font-size:12px;transform:scaleX(0.9192);transform-origin:0 0;line-height:12px;">COMX 100XX-RE/PNS V3.5.0 - V3.5.17</span>
<div style="left:908px;top:617px;width:11px;height:1px;background:repeating-linear-gradient(90deg,#808080 0 1px,transparent 1px 2px);"></div>
<svg style="left:919px;top:611px;" width="16" height="10" viewBox="0 0 16 10"><rect x="0" y="0" width="7" height="6.2" fill="#9a9a9a"/>
<rect x="1.6" y="1.4" width="4.2" height="4" fill="#000"/>
<rect x="2.6" y="2.6" width="1.2" height="1" fill="#e02020"/><rect x="2.6" y="3.6" width="1.2" height="1" fill="#1818c0"/>
<rect x="5.8" y="2" width="1" height="3" fill="#a0a020"/><rect x="0.6" y="4.8" width="1.2" height="1" fill="#a0a020"/><rect x="3" y="5.4" width="2" height="0.8" fill="#a0a020"/>
<rect x="7" y="1" width="7" height="7.4" fill="#e6e6e6"/>
<path d="M8 2.5H13M8 5.5H11.5" stroke="#9a9a9a" fill="none"/>
<rect x="14" y="1" width="1" height="8.4" fill="#000"/>
<rect x="8" y="8.2" width="7" height="1.2" fill="#000"/>
<path d="M1 9.2V7.6H7V6.6" fill="none" stroke="#000" stroke-width="1.2"/></svg>
<span id="t35" class="t " style="left:939.90px;top:610.20px;font-size:12px;transform:scaleX(0.9195);transform-origin:0 0;line-height:12px;">COMX 100XX-RE/PNS V3.5.18 - V3.5.34</span>
<div style="left:908px;top:635px;width:11px;height:1px;background:repeating-linear-gradient(90deg,#808080 0 1px,transparent 1px 2px);"></div>
<svg style="left:919px;top:629px;" width="16" height="10" viewBox="0 0 16 10"><rect x="0" y="0" width="7" height="6.2" fill="#9a9a9a"/>
<rect x="1.6" y="1.4" width="4.2" height="4" fill="#000"/>
<rect x="2.6" y="2.6" width="1.2" height="1" fill="#e02020"/><rect x="2.6" y="3.6" width="1.2" height="1" fill="#1818c0"/>
<rect x="5.8" y="2" width="1" height="3" fill="#a0a020"/><rect x="0.6" y="4.8" width="1.2" height="1" fill="#a0a020"/><rect x="3" y="5.4" width="2" height="0.8" fill="#a0a020"/>
<rect x="7" y="1" width="7" height="7.4" fill="#e6e6e6"/>
<path d="M8 2.5H13M8 5.5H11.5" stroke="#9a9a9a" fill="none"/>
<rect x="14" y="1" width="1" height="8.4" fill="#000"/>
<rect x="8" y="8.2" width="7" height="1.2" fill="#000"/>
<path d="M1 9.2V7.6H7V6.6" fill="none" stroke="#000" stroke-width="1.2"/></svg>
<span id="t36" class="t " style="left:939.90px;top:628.20px;font-size:12px;transform:scaleX(0.9198);transform-origin:0 0;line-height:12px;">COMX 100XX-RE/PNS V3.5.35 - V3.x</span>
<div style="left:908px;top:653px;width:11px;height:1px;background:repeating-linear-gradient(90deg,#808080 0 1px,transparent 1px 2px);"></div>
<svg style="left:919px;top:647px;" width="16" height="10" viewBox="0 0 16 10"><rect x="0" y="0" width="7" height="6.2" fill="#9a9a9a"/>
<rect x="1.6" y="1.4" width="4.2" height="4" fill="#000"/>
<rect x="2.6" y="2.6" width="1.2" height="1" fill="#e02020"/><rect x="2.6" y="3.6" width="1.2" height="1" fill="#1818c0"/>
<rect x="5.8" y="2" width="1" height="3" fill="#a0a020"/><rect x="0.6" y="4.8" width="1.2" height="1" fill="#a0a020"/><rect x="3" y="5.4" width="2" height="0.8" fill="#a0a020"/>
<rect x="7" y="1" width="7" height="7.4" fill="#e6e6e6"/>
<path d="M8 2.5H13M8 5.5H11.5" stroke="#9a9a9a" fill="none"/>
<rect x="14" y="1" width="1" height="8.4" fill="#000"/>
<rect x="8" y="8.2" width="7" height="1.2" fill="#000"/>
<path d="M1 9.2V7.6H7V6.6" fill="none" stroke="#000" stroke-width="1.2"/></svg>
<span id="t37" class="t " style="left:939.90px;top:646.20px;font-size:12px;transform:scaleX(0.9151);transform-origin:0 0;line-height:12px;">COMX 50XX-REFO/PNS V3.4.138 - V3.4.142</span>
<div style="left:859px;top:654px;width:306px;height:17px;background:#f0f0f0;"></div>
<div style="left:859px;top:654px;width:306px;height:1px;background:#a0a0a0;"></div>
<div style="left:858px;top:654px;width:17px;height:17px;background:#f0f0f0;border:1px solid #a0a0a0;box-sizing:border-box;box-shadow:inset 1px 1px 0 #fff;"></div>
<div style="left:874px;top:654px;width:17px;height:17px;background:#f0f0f0;border:1px solid #a0a0a0;box-sizing:border-box;box-shadow:inset 1px 1px 0 #fff;"></div>
<svg style="left:858px;top:654px;" width="33" height="17" viewBox="0 0 33 17"><path d="M13.5 3.5L7.5 8.5L13.5 13.5Z" fill="#a0a0a0"/><path d="M21.5 3.5L27.5 8.5L21.5 13.5Z" fill="#a0a0a0"/></svg>
<svg style="left:950.3px;top:654px;" width="64" height="17" viewBox="0 0 64 17"><path d="M0.5 0L8 16.5H56L63.5 0Z" fill="#f0f0f0"/><path d="M8 16.5H56" fill="none" stroke="#a0a0a0"/><path d="M0.5 0L8 16.5M56 16.5L63.5 0" fill="none" stroke="#000" stroke-width="1.1"/></svg>
<svg style="left:1003.8px;top:654px;" width="81.5" height="17" viewBox="0 0 81.5 17"><path d="M0.5 0L8 16.5H73.5L81.0 0Z" fill="#f0f0f0"/><path d="M8 16.5H73.5" fill="none" stroke="#a0a0a0"/><path d="M0.5 0L8 16.5M73.5 16.5L81.0 0" fill="none" stroke="#000" stroke-width="1.1"/></svg>
<svg style="left:1074.9px;top:654px;" width="58.4" height="17" viewBox="0 0 58.4 17"><path d="M0.5 0L8 16.5H50.4L57.9 0Z" fill="#f0f0f0"/><path d="M8 16.5H50.4" fill="none" stroke="#a0a0a0"/><path d="M0.5 0L8 16.5M50.4 16.5L57.9 0" fill="none" stroke="#000" stroke-width="1.1"/></svg>
<svg style="left:891px;top:654px;" width="69.5" height="17" viewBox="0 0 69.5 17"><path d="M0.5 0L8 16.5H61.5L69.0 0Z" fill="#fff"/><path d="M8 16.5H61.5" fill="none" stroke="#a0a0a0"/><path d="M0.5 0L8 16.5M61.5 16.5L69.0 0" fill="none" stroke="#000" stroke-width="1.1"/></svg>
<span id="t38" class="t " style="left:903.10px;top:656.20px;font-size:12px;font-weight:bold;transform:scaleX(0.9161);transform-origin:0 0;line-height:12px;">Fieldbus</span>
<span id="t39" class="t " style="left:962.60px;top:656.20px;font-size:12px;letter-spacing:-0.061px;line-height:12px;">Vendor</span>
<span id="t40" class="t " style="left:1015.00px;top:656.20px;font-size:12px;transform:scaleX(0.9421);transform-origin:0 0;line-height:12px;">DTM Class</span>
<span id="t41" class="t " style="left:1086.50px;top:656.20px;font-size:12px;letter-spacing:0.149px;line-height:12px;">Found</span>
<div style="left:857px;top:676px;width:320px;height:134px;background:#ffffff;"></div>
<div style="left:857px;top:676px;width:319px;height:133px;background:#a0a0a0;"></div>
<div style="left:858px;top:677px;width:318px;height:132px;background:#e3e3e3;"></div>
<div style="left:858px;top:677px;width:317px;height:131px;background:#696969;"></div>
<div style="left:859px;top:678px;width:316px;height:130px;background:#fff;"></div>
<span id="t42" class="t " style="left:862.70px;top:679.20px;font-size:11.5px;font-weight:bold;color:#008000;letter-spacing:-0.098px;line-height:12px;">DTM:</span>
<span id="t43" class="t " style="left:922.90px;top:679.20px;font-size:11.5px;font-weight:bold;color:#008000;letter-spacing:-0.158px;line-height:12px;">PROFINET IO Devices DTM</span>
<span id="t44" class="t " style="left:869.70px;top:692.20px;font-size:11.5px;font-weight:bold;letter-spacing:0.329px;line-height:12px;">Info:</span>
<span id="t45" class="t " style="left:935.90px;top:692.20px;font-size:11.5px;letter-spacing:0.420px;line-height:12px;">--</span>
<span id="t46" class="t " style="left:869.70px;top:705.20px;font-size:11.5px;font-weight:bold;letter-spacing:0.151px;line-height:12px;">Vendor:</span>
<span id="t47" class="t " style="left:934.70px;top:705.20px;font-size:11.5px;transform:scaleX(0.8824);transform-origin:0 0;line-height:12px;">Hilscher GmbH</span>
<span id="t48" class="t " style="left:869.70px;top:718.20px;font-size:11.5px;font-weight:bold;letter-spacing:0.041px;line-height:12px;">Version:</span>
<span id="t49" class="t " style="left:935.10px;top:718.20px;font-size:11.5px;letter-spacing:-0.153px;line-height:12px;">V1.1100.7.2625</span>
<span id="t50" class="t " style="left:869.70px;top:731.20px;font-size:11.5px;font-weight:bold;letter-spacing:0.319px;line-height:12px;">Date:</span>
<span id="t51" class="t " style="left:935.40px;top:731.20px;font-size:11.5px;transform:scaleX(0.9570);transform-origin:0 0;line-height:12px;">2009-05-07</span>
<span id="t52" class="t " style="left:862.70px;top:757.20px;font-size:11.5px;font-weight:bold;color:#008000;letter-spacing:0.058px;line-height:12px;">Device:</span>
<span id="t53" class="t " style="left:922.90px;top:757.20px;font-size:11.5px;font-weight:bold;color:#008000;letter-spacing:-0.025px;line-height:12px;">CIFX RE/PNS V3.5.35 - V3.x</span>
<span id="t54" class="t " style="left:869.70px;top:770.20px;font-size:11.5px;font-weight:bold;letter-spacing:0.329px;line-height:12px;">Info:</span>
<span id="t55" class="t " style="left:935.10px;top:770.20px;font-size:11.5px;transform:scaleX(0.9343);transform-origin:0 0;line-height:12px;">Firmware version V3.5.35 - V3.x Supports FastS</span>
<span id="t56" class="t " style="left:862.40px;top:783.20px;font-size:11.5px;transform:scaleX(0.9407);transform-origin:0 0;line-height:12px;">Identification &amp; Maintenance 1-5, Shared Device, RT and IRT C</span>
<span id="t57" class="t " style="left:862.40px;top:796.20px;font-size:11.5px;transform:scaleX(0.9401);transform-origin:0 0;line-height:12px;">Advanced startup. [0x00002081] [DIM 24] [GSDML-V2.33-HILS</span>
<div style="left:2px;top:825px;width:1159px;height:1px;background:#a0a0a0;"></div>
<div style="left:2px;top:826px;width:15px;height:97px;background:#f0f0f0;border:1px solid #a0a0a0;border-radius:2px;box-sizing:border-box;box-shadow:inset 1px 1px 0 #f8f8f8;"></div>
<svg style="left:6.5px;top:830px;" width="7" height="6" viewBox="0 0 7 6"><path d="M0.6 0.4L6.2 5.4M6.2 0.4L0.6 5.4" stroke="#000" stroke-width="1.7" fill="none"/></svg>
<svg style="left:8px;top:842.5px;" width="5" height="8" viewBox="0 0 5 8"><path d="M4.5 0L0 3.7L4.5 7.4Z" fill="#a0a0a0"/></svg>
<span id="t58" class="t" style="left:3px;top:919px;font-size:11.5px;line-height:12px;transform-origin:0 0;transform:rotate(-90deg);letter-spacing:-0.288px;">Output Windo</span>
<div style="left:20px;top:826px;width:1142px;height:80px;background:#ffffff;"></div>
<div style="left:19px;top:826px;width:1px;height:80px;background:#a0a0a0;"></div>
<div style="left:20px;top:906px;width:684px;height:17px;background:#f0f0f0;"></div>
<div style="left:20px;top:906px;width:684px;height:1px;background:#a0a0a0;"></div>
<div style="left:19px;top:906px;width:17px;height:17px;background:#f0f0f0;border:1px solid #a0a0a0;box-sizing:border-box;box-shadow:inset 1px 1px 0 #fff;"></div>
<div style="left:35px;top:906px;width:17px;height:17px;background:#f0f0f0;border:1px solid #a0a0a0;box-sizing:border-box;box-shadow:inset 1px 1px 0 #fff;"></div>
<div style="left:51px;top:906px;width:17px;height:17px;background:#f0f0f0;border:1px solid #a0a0a0;box-sizing:border-box;box-shadow:inset 1px 1px 0 #fff;"></div>
<div style="left:67px;top:906px;width:17px;height:17px;background:#f0f0f0;border:1px solid #a0a0a0;box-sizing:border-box;box-shadow:inset 1px 1px 0 #fff;"></div>
<svg style="left:19px;top:906px;" width="65" height="17" viewBox="0 0 65 17"><rect x="6" y="3.5" width="1.3" height="10" fill="#a0a0a0"/><path d="M13.5 3.5L8 8.5L13.5 13.5Z" fill="#a0a0a0"/><path d="M29.5 3.5L23.5 8.5L29.5 13.5Z" fill="#a0a0a0"/><path d="M37 3.5L43 8.5L37 13.5Z" fill="#a0a0a0"/><path d="M53 3.5L59 8.5L53 13.5Z" fill="#a0a0a0"/><rect x="60" y="3.5" width="1.3" height="10" fill="#a0a0a0"/></svg>
<svg style="left:84.5px;top:906px;" width="83.5" height="17" viewBox="0 0 83.5 17"><path d="M0.5 0L8 16.5H75.5L83.0 0Z" fill="#f0f0f0"/><path d="M8 16.5H75.5" fill="none" stroke="#a0a0a0"/><path d="M0.5 0L8 16.5M75.5 16.5L83.0 0" fill="none" stroke="#000" stroke-width="1.1"/></svg>
<svg style="left:158.2px;top:906px;" width="82.4" height="17" viewBox="0 0 82.4 17"><path d="M0.5 0L8 16.5H74.4L81.9 0Z" fill="#fff"/><path d="M8 16.5H74.4" fill="none" stroke="#a0a0a0"/><path d="M0.5 0L8 16.5M74.4 16.5L81.9 0" fill="none" stroke="#000" stroke-width="1.1"/></svg>
<span id="t59" class="t " style="left:95.60px;top:908.20px;font-size:12px;transform:scaleX(0.9395);transform-origin:0 0;line-height:12px;">SYCON.net</span>
<span id="t60" class="t " style="left:169.80px;top:908.20px;font-size:12px;font-weight:bold;letter-spacing:0.177px;line-height:12px;">netDevice</span>
<div style="left:704px;top:907px;width:457px;height:16px;background:#f0f0f0;"></div>
<div style="left:20px;top:923px;width:1142px;height:1px;background:#ffffff;"></div>
<div style="left:1161px;top:826px;width:1px;height:98px;background:#ffffff;"></div>
<div style="left:709px;top:906px;width:1px;height:17px;background:#808080;"></div>
<div style="left:704px;top:922px;width:6px;height:1px;background:#808080;"></div>
<div style="left:727px;top:907px;width:370px;height:16px;background:#cdcdcd;"></div>
<svg style="left:715px;top:911px;" width="6" height="7" viewBox="0 0 6 7"><path d="M3 0H6L3 3.5L6 7H3L0 3.5Z" fill="#484848"/></svg>
<svg style="left:1133px;top:911px;" width="6" height="7" viewBox="0 0 6 7"><path d="M0 0H3L6 3.5L3 7H0L3 3.5Z" fill="#484848"/></svg>
<div style="left:1144px;top:906px;width:17px;height:1px;background:#a0a0a0;"></div>
<div style="left:1px;top:946px;width:1164px;height:1px;background:#ffffff;"></div>
<span id="t61" class="t " style="left:2.90px;top:933.20px;font-size:12px;transform:scaleX(0.9196);transform-origin:0 0;line-height:12px;">Ready</span>
<div style="left:848px;top:930px;width:197px;height:17px;background:#f0f0f0;border:1px solid #a0a0a0;box-sizing:border-box;"></div>
<div style="left:1046px;top:930px;width:30px;height:17px;background:#f0f0f0;border:1px solid #a0a0a0;box-sizing:border-box;"></div>
<div style="left:1077px;top:930px;width:34px;height:17px;background:#f0f0f0;border:1px solid #a0a0a0;box-sizing:border-box;"></div>
<div style="left:1113px;top:930px;width:33px;height:17px;background:#f0f0f0;border:1px solid #a0a0a0;box-sizing:border-box;"></div>
<span id="t62" class="t " style="left:851.00px;top:933.20px;font-size:12px;letter-spacing:0.264px;line-height:12px;">Administrator</span>
<span id="t63" class="t " style="left:1079.00px;top:933.20px;font-size:12px;letter-spacing:0.183px;line-height:12px;">NUM</span>
<svg style="left:1155px;top:937px;" width="8" height="8" viewBox="0 0 8 8"><rect x="6" y="0" width="2" height="2" fill="#adadad"/><rect x="6" y="3" width="2" height="2" fill="#adadad"/><rect x="6" y="6" width="2" height="2" fill="#adadad"/><rect x="3" y="3" width="2" height="2" fill="#adadad"/><rect x="3" y="6" width="2" height="2" fill="#adadad"/><rect x="0" y="6" width="2" height="2" fill="#adadad"/></svg>
<div style="left:314px;top:380px;width:200px;height:356px;background:#f2f2f2;border:1px solid #cccccc;box-sizing:border-box;"></div>
<div style="left:315px;top:381px;width:30px;height:354px;background:#f0f0f0;"></div>
<span id="t64" class="t " style="left:348.80px;top:388.20px;font-size:12px;letter-spacing:0.062px;line-height:12px;">Connect</span>
<span id="t65" class="t " style="left:348.80px;top:410.20px;font-size:12px;color:#6d6d6d;letter-spacing:-0.008px;line-height:12px;">Disconnect</span>
<div style="left:345px;top:430px;width:166px;height:1px;background:#d7d7d7;"></div>
<span id="t66" class="t " style="left:348.80px;top:439.20px;font-size:12px;letter-spacing:0.084px;line-height:12px;">Download</span>
<span id="t67" class="t " style="left:348.80px;top:461.20px;font-size:12px;letter-spacing:-0.006px;line-height:12px;">Upload</span>
<div style="left:345px;top:481px;width:166px;height:1px;background:#d7d7d7;"></div>
<span id="t68" class="t " style="left:348.80px;top:490.20px;font-size:12px;letter-spacing:0.207px;line-height:12px;">Cut</span>
<span id="t69" class="t " style="left:348.80px;top:512.20px;font-size:12px;letter-spacing:0.106px;line-height:12px;">Copy</span>
<span id="t70" class="t " style="left:348.80px;top:534.20px;font-size:12px;color:#6d6d6d;transform:scaleX(0.9317);transform-origin:0 0;line-height:12px;">Paste</span>
<div style="left:345px;top:554px;width:166px;height:1px;background:#d7d7d7;"></div>
<span id="t71" class="t " style="left:348.80px;top:563.20px;font-size:12px;letter-spacing:0.104px;line-height:12px;">Configuration...</span>
<span id="t72" class="t " style="left:348.80px;top:585.20px;font-size:12px;color:#6d6d6d;transform:scaleX(0.9564);transform-origin:0 0;line-height:12px;">Measured Value...</span>
<span id="t73" class="t " style="left:348.80px;top:607.20px;font-size:12px;color:#6d6d6d;letter-spacing:0.013px;line-height:12px;">Simulation...</span>
<span id="t74" class="t " style="left:348.80px;top:629.20px;font-size:12px;color:#6d6d6d;transform:scaleX(0.9600);transform-origin:0 0;line-height:12px;">Diagnosis...</span>
<div style="left:345px;top:649px;width:166px;height:1px;background:#d7d7d7;"></div>
<div style="left:317px;top:653px;width:194px;height:22px;background:#91c9f7;"></div>
<span id="t75" class="t " style="left:348.80px;top:658.20px;font-size:12px;letter-spacing:0.104px;line-height:12px;">Additional Functions</span>
<svg style="left:497px;top:659px;" width="6" height="9" viewBox="0 0 6 9"><path d="M1 0.7L4.8 4.5L1 8.3" stroke="#000" stroke-width="1.1" fill="none"/></svg>
<div style="left:345px;top:678px;width:166px;height:1px;background:#d7d7d7;"></div>
<span id="t76" class="t " style="left:348.80px;top:687.20px;font-size:12px;transform:scaleX(0.9654);transform-origin:0 0;line-height:12px;">Delete</span>
<div style="left:345px;top:707px;width:166px;height:1px;background:#d7d7d7;"></div>
<span id="t77" class="t " style="left:348.80px;top:716.20px;font-size:12px;letter-spacing:-0.054px;line-height:12px;">Symbolic Name...</span>
<div style="left:509px;top:650px;width:186px;height:174px;background:#f2f2f2;border:1px solid #cccccc;box-sizing:border-box;"></div>
<div style="left:510px;top:651px;width:29px;height:172px;background:#f0f0f0;"></div>
<span id="t78" class="t " style="left:542.50px;top:658.20px;font-size:12px;color:#6d6d6d;letter-spacing:0.025px;line-height:12px;">Offline Compare...</span>
<span id="t79" class="t " style="left:542.50px;top:680.20px;font-size:12px;color:#6d6d6d;letter-spacing:-0.042px;line-height:12px;">Online Compare...</span>
<span id="t80" class="t " style="left:542.50px;top:702.20px;font-size:12px;color:#6d6d6d;letter-spacing:-0.157px;line-height:12px;">Setpoint Value...</span>
<div style="left:539px;top:722px;width:153px;height:1px;background:#d7d7d7;"></div>
<span id="t81" class="t " style="left:542.50px;top:731.20px;font-size:12px;transform:scaleX(0.9497);transform-origin:0 0;line-height:12px;">Service</span>
<svg style="left:678px;top:732px;" width="6" height="9" viewBox="0 0 6 9"><path d="M1 0.7L4.8 4.5L1 8.3" stroke="#000" stroke-width="1.1" fill="none"/></svg>
<span id="t82" class="t " style="left:542.50px;top:753.20px;font-size:12px;transform:scaleX(0.9621);transform-origin:0 0;line-height:12px;">License</span>
<div style="left:539px;top:773px;width:153px;height:1px;background:#d7d7d7;"></div>
<div style="left:512px;top:777px;width:180px;height:22px;background:#91c9f7;"></div>
<span id="t83" class="t " style="left:542.50px;top:782.20px;font-size:12px;letter-spacing:-0.180px;line-height:12px;">Export</span>
<svg style="left:678px;top:783px;" width="6" height="9" viewBox="0 0 6 9"><path d="M1 0.7L4.8 4.5L1 8.3" stroke="#000" stroke-width="1.1" fill="none"/></svg>
<span id="t84" class="t " style="left:542.50px;top:804.20px;font-size:12px;letter-spacing:0.225px;line-height:12px;">Print</span>
<svg style="left:678px;top:805px;" width="6" height="9" viewBox="0 0 6 9"><path d="M1 0.7L4.8 4.5L1 8.3" stroke="#000" stroke-width="1.1" fill="none"/></svg>
<div style="left:689px;top:774px;width:149px;height:72px;background:#f2f2f2;border:1px solid #cccccc;box-sizing:border-box;"></div>
<div style="left:690px;top:775px;width:30px;height:70px;background:#f0f0f0;"></div>
<span id="t85" class="t " style="left:723.50px;top:782.20px;font-size:12px;transform:scaleX(0.9083);transform-origin:0 0;line-height:12px;">CSV...</span>
<div style="left:692px;top:799px;width:143px;height:22px;background:#91c9f7;"></div>
<span id="t86" class="t " style="left:723.50px;top:804.20px;font-size:12px;letter-spacing:-0.006px;line-height:12px;">DBM/nxd...</span>
<span id="t87" class="t " style="left:723.50px;top:826.20px;font-size:12px;transform:scaleX(0.9629);transform-origin:0 0;line-height:12px;">XML...</span>
<svg style="left:830.7px;top:809px;" width="13" height="21" viewBox="0 0 13 21"><path d="M1 1V17.2L4.8 13.6L7.6 20L10.2 18.9L7.5 12.6H12.4Z" fill="#fff" stroke="#000" stroke-width="1" stroke-linejoin="miter"/></svg>
<div style="left:0px;top:0px;width:1167px;height:1px;background:#0c1626;"></div>
<div style="left:0px;top:0px;width:1px;height:949px;background:#0c1626;"></div>
<div style="left:1164px;top:1px;width:1px;height:946px;background:#ffffff;"></div>
<div style="left:1165px;top:0px;width:1px;height:949px;background:#0a1a30;"></div>
<div style="left:1166px;top:0px;width:1px;height:949px;background:linear-gradient(180deg,#0c1626 0%,#0d1a33 45%,#10305c 65%,#1f4a86 74%,#14427c 86%,#0a2c5c 94%,#001f4a 100%);"></div>
<div style="left:0px;top:947px;width:1167px;height:1px;background:#0a1420;"></div>
<div style="left:0px;top:948px;width:1167px;height:1px;background:#001f48;"></div>
</body></html>
